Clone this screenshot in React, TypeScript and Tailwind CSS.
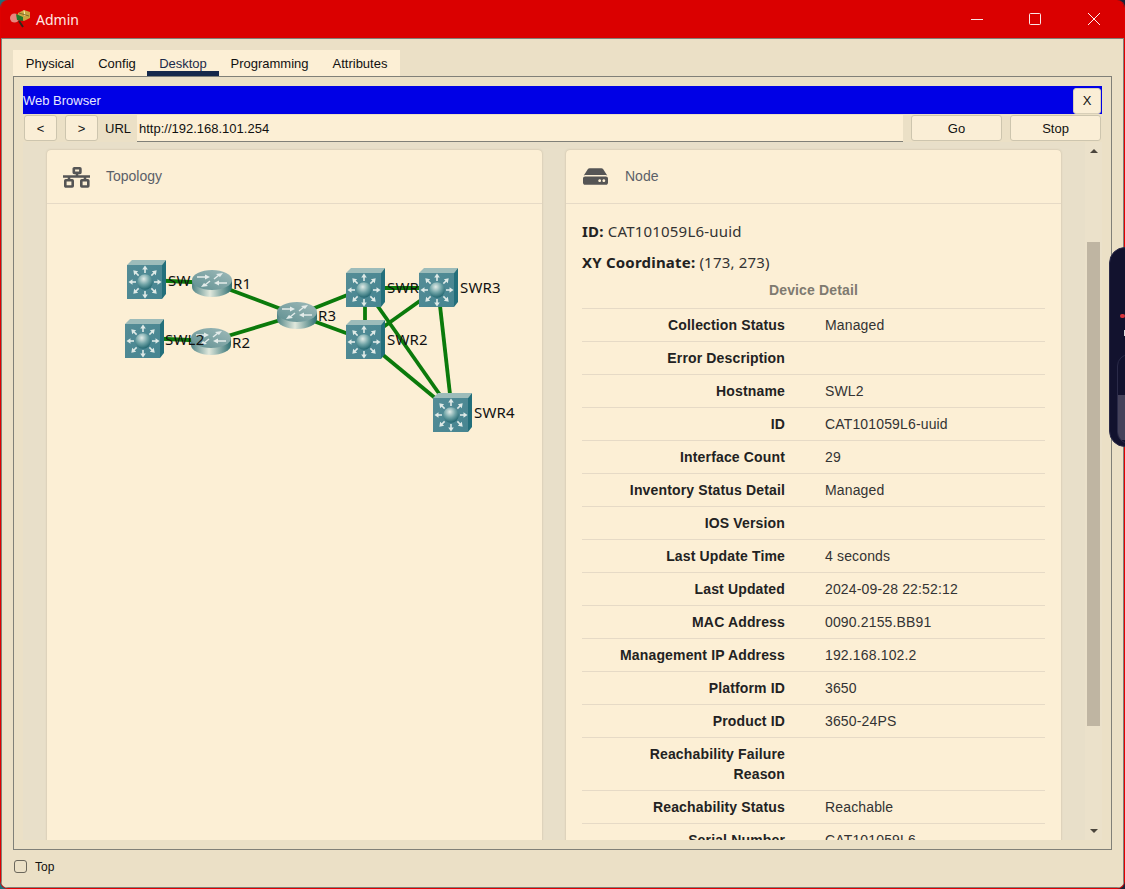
import React from "react";
import { FaHdd } from "react-icons/fa";

const rows: [string, string][] = [
  ["Collection Status", "Managed"],
  ["Error Description", ""],
  ["Hostname", "SWL2"],
  ["ID", "CAT101059L6-uuid"],
  ["Interface Count", "29"],
  ["Inventory Status Detail", "Managed"],
  ["IOS Version", ""],
  ["Last Update Time", "4 seconds"],
  ["Last Updated", "2024-09-28 22:52:12"],
  ["MAC Address", "0090.2155.BB91"],
  ["Management IP Address", "192.168.102.2"],
  ["Platform ID", "3650"],
  ["Product ID", "3650-24PS"],
  ["Reachability Failure Reason", ""],
  ["Reachability Status", "Reachable"],
  ["Serial Number", "CAT101059L6"],
];

const links: [number, number, number, number][] = [
  [147, 280, 212, 283],
  [144, 338, 211, 341],
  [212, 283, 297, 315],
  [211, 341, 297, 315],
  [297, 315, 365, 288],
  [297, 315, 365, 340],
  [365, 288, 438, 288],
  [365, 288, 365, 340],
  [438, 288, 365, 340],
  [365, 288, 452, 412],
  [365, 340, 452, 412],
  [438, 288, 452, 412],
];

const tabs: [string, string][] = [
  ["Physical", "w-[74px]"],
  ["Config", "w-[60px]"],
  ["Desktop", "w-[72px]"],
  ["Programming", "w-[101px]"],
  ["Attributes", "w-[80px]"],
];

function Sw({ x, y }: { x: number; y: number }) {
  const cx = x + 18;
  const cy = y + 22;
  const angles = [0, 45, 90, 135, 180, 225, 270, 315];
  return (
    <g>
      <polygon points={`${x},${y + 5} ${x + 5},${y} ${x + 39},${y} ${x + 35},${y + 5}`} fill="#9dbcba" />
      <polygon points={`${x + 35},${y + 5} ${x + 39},${y} ${x + 39},${y + 34} ${x + 35},${y + 39}`} fill="#236f7b" />
      <rect x={x} y={y + 5} width={35} height={34} fill="url(#swFace)" />
      {angles.map((a) => (
        <g key={a} transform={`rotate(${a} ${cx} ${cy})`}>
          <line x1={cx + 9} y1={cy} x2={cx + 13} y2={cy} stroke="#dfeae7" strokeWidth={1.6} />
          <polygon points={`${cx + 16.5},${cy} ${cx + 12.5},${cy - 2.8} ${cx + 12.5},${cy + 2.8}`} fill="#dfeae7" />
        </g>
      ))}
      <circle cx={cx} cy={cy} r={7.8} fill="url(#swBall)" />
    </g>
  );
}

function Rt({ x, y }: { x: number; y: number }) {
  const w = 40;
  const h = 27;
  const ry = 10;
  const cx = x + w / 2;
  const cy = y + ry;
  return (
    <g>
      <path
        d={`M${x},${cy} L${x},${y + h - ry} A${w / 2},${ry} 0 0 0 ${x + w},${y + h - ry} L${x + w},${cy} Z`}
        fill="url(#rtBody)"
      />
      <ellipse cx={cx} cy={cy} rx={w / 2} ry={ry} fill="url(#rtTop)" />
      <g fill="none" stroke="#e4ecea" strokeWidth={1.5}>
        <path d={`M${cx - 15},${cy - 3} L${cx - 6},${cy - 3}`} />
        <path d={`M${cx + 15},${cy + 3} L${cx + 6},${cy + 3}`} />
        <path d={`M${cx + 2},${cy - 1} L${cx + 7},${cy - 5}`} />
        <path d={`M${cx - 2},${cy + 1} L${cx - 7},${cy + 5}`} />
      </g>
      <g fill="#e4ecea">
        <polygon points={`${cx - 2},${cy - 3} ${cx - 7},${cy - 5.5} ${cx - 7},${cy - 0.5}`} />
        <polygon points={`${cx + 2},${cy + 3} ${cx + 7},${cy + 0.5} ${cx + 7},${cy + 5.5}`} />
        <polygon points={`${cx + 11},${cy - 7} ${cx + 4},${cy - 6} ${cx + 8},${cy - 3}`} />
        <polygon points={`${cx - 11},${cy + 7} ${cx - 4},${cy + 6} ${cx - 8},${cy + 3}`} />
      </g>
    </g>
  );
}

function Label({ x, y, children }: { x: number; y: number; children: string }) {
  return (
    <text x={x} y={y} fontSize={15} fill="#111" letterSpacing={0.2} style={{ fontFamily: '"Noto Sans", sans-serif' }}>
      {children}
    </text>
  );
}

function TopologyCanvas() {
  return (
    <svg viewBox="47 204 495 300" width={495} height={300} className="block">
      <defs>
        <linearGradient id="swFace" x1="0" y1="0" x2="1" y2="1">
          <stop offset="0" stopColor="#548c96" />
          <stop offset="1" stopColor="#468591" />
        </linearGradient>
        <radialGradient id="swBall" cx="0.42" cy="0.3" r="0.75">
          <stop offset="0" stopColor="#e2ece8" />
          <stop offset="0.5" stopColor="#6fa3a6" />
          <stop offset="1" stopColor="#175e69" />
        </radialGradient>
        <linearGradient id="rtBody" x1="0" y1="0" x2="1" y2="0">
          <stop offset="0" stopColor="#4f8385" />
          <stop offset="0.45" stopColor="#e0e8dc" />
          <stop offset="1" stopColor="#2f6f72" />
        </linearGradient>
        <linearGradient id="rtTop" x1="0" y1="1" x2="1" y2="0">
          <stop offset="0" stopColor="#5f8f91" />
          <stop offset="1" stopColor="#a0bbba" />
        </linearGradient>
      </defs>
      {links.map(([a, b, c, d], i) => (
        <line key={i} x1={a} y1={b} x2={c} y2={d} stroke="#0b7a0b" strokeWidth={3.8} />
      ))}
      <Sw x={127} y={260} />
      <Label x={168} y={286}>SW</Label>
      <Rt x={192} y={270} />
      <Label x={233} y={289}>R1</Label>
      <Sw x={125} y={319} />
      <Rt x={191} y={328} />
      <Label x={165} y={345}>SWL2</Label>
      <Label x={232} y={348}>R2</Label>
      <Rt x={277} y={302} />
      <Label x={318} y={321}>R3</Label>
      <Sw x={346} y={268} />
      <Label x={387} y={293}>SWR</Label>
      <Sw x={419} y={268} />
      <Label x={460} y={293}>SWR3</Label>
      <Sw x={346} y={320} />
      <Label x={387} y={345}>SWR2</Label>
      <Sw x={433} y={393} />
      <Label x={474} y={418}>SWR4</Label>
    </svg>
  );
}

function AppIcon() {
  return (
    <svg width={22} height={22} viewBox="0 0 22 22" className="shrink-0">
      <circle cx={4.5} cy={10} r={4.5} fill="#e8857c" />
      <line x1={9} y1={13} x2={13} y2={19} stroke="#33261a" strokeWidth={2} />
      <polygon points="8,5 14,2 20,4 20,10 14,13 8,10" fill="#c9a43f" />
      <polygon points="6,6 13,9 13,13 7,12" fill="#1f7a2a" />
      <line x1={14} y1={2.5} x2={15} y2={8} stroke="#fff1b8" strokeWidth={1} />
      <line x1={9} y1={5} x2={19} y2={8} stroke="#6b5a20" strokeWidth={0.8} />
    </svg>
  );
}

function NetIcon() {
  return (
    <svg width={27} height={22} viewBox="0 0 27 22" className="shrink-0">
      <g fill="none" stroke="#555" strokeWidth={2.6}>
        <rect x={10.8} y={2.3} width={6.6} height={4.6} rx={0.5} />
        <rect x={2.3} y={14.3} width={7.4} height={6.2} rx={0.5} />
        <rect x={18.3} y={14.3} width={7} height={6.2} rx={0.5} />
        <path d="M14 7v3M0 10.5h27M6 10.5v4M22 10.5v4" />
      </g>
    </svg>
  );
}

function Btn({ className, children }: { className: string; children: React.ReactNode }) {
  return (
    <button className={`h-[26px] shrink-0 rounded-[3px] border border-[#cdc5ae] bg-[#faeed6] pt-px text-[13px] text-[#111] ${className}`}>
      {children}
    </button>
  );
}

export default function App() {
  return (
    <div
      className="relative h-[889px] w-[1125px] overflow-hidden bg-gradient-to-r from-[#1d6f7a] to-[#1a2238] text-[13px] text-[#111]"
      style={{ fontFamily: '"Liberation Sans", Arial, sans-serif' }}
    >
      <div className="flex h-full flex-col overflow-hidden rounded-[8px] border-x border-b border-[#e00000]">
        <div className="flex h-[38px] shrink-0 items-center bg-[#da0000] pl-[9px]">
          <AppIcon />
          <span
            className="ml-[4px] text-[14px] text-[#ffe9e4]"
            style={{ fontFamily: '"Noto Sans", sans-serif' }}
          >
            Admin
          </span>
          <div className="ml-auto flex items-center">
            <svg width={14} height={14} viewBox="0 0 14 14" className="mr-[44px]">
              <line x1={1} y1={7.5} x2={13} y2={7.5} stroke="#fff" strokeWidth={1} opacity={0.9} />
            </svg>
            <svg width={14} height={14} viewBox="0 0 14 14" className="mr-[45px]">
              <rect x={1.5} y={1.5} width={11} height={11} rx={1} fill="none" stroke="#fff" strokeWidth={1} opacity={0.9} />
            </svg>
            <svg width={14} height={14} viewBox="0 0 14 14" className="mr-[23px]">
              <path d="M1 1L13 13M13 1L1 13" stroke="#fff" strokeWidth={1} opacity={0.95} />
            </svg>
          </div>
        </div>

        <div className="flex min-h-0 flex-1 flex-col border border-[#808078] bg-[#ebe0c6] pl-[11px] pr-[11px] pt-[11px]">
          <div className="flex h-[26px] w-[387px] shrink-0 bg-[#fcefd5]">
            {tabs.map(([t, w]) => (
              <div
                key={t}
                className={
                  t === "Desktop"
                    ? `flex items-center justify-center border-b-[5px] border-[#15284b] pt-[6px] text-[#1b2a4a] ${w}`
                    : `flex items-center justify-center pt-[1px] ${w}`
                }
              >
                {t}
              </div>
            ))}
          </div>

          <div className="flex min-h-0 flex-1 flex-col border border-[#808078] px-[9px] pb-[9px] pt-[9px]">
            <div className="flex h-[28px] shrink-0 items-center justify-between bg-[#0000e6] pr-px pt-px text-[#e8e8ff]">
              <span>Web Browser</span>
              <Btn className="w-[28px] border-[#d8cfb8]">X</Btn>
            </div>

            <div className="mt-px flex h-[27px] shrink-0 items-start pl-px">
              <Btn className="w-[33px]">&lt;</Btn>
              <Btn className="ml-[8px] w-[33px]">&gt;</Btn>
              <span className="ml-[7px] flex h-[26px] w-[32px] items-center pt-px">URL</span>
              <div className="flex h-[27px] w-[766px] shrink-0 items-center border-b border-[#808078] bg-[#fcefd5] pl-[2px] pt-px">
                http://192.168.101.254
              </div>
              <Btn className="ml-[8px] w-[91px]">Go</Btn>
              <Btn className="ml-[8px] w-[91px]">Stop</Btn>
            </div>

            <div className="flex min-h-0 flex-1 overflow-hidden">
              <div className="grid min-w-0 flex-1 grid-cols-[495px_495px] items-stretch gap-[24px] overflow-hidden bg-[#e8dfc9] pl-[24px] pt-[8px]">
                <div className="rounded-t-[4px] bg-[#fcefd5] shadow-[0_0_2px_rgba(120,100,70,0.35)]">
                  <div className="flex h-[54px] items-center border-b border-[#e6dac6] pl-[16px]">
                    <NetIcon />
                    <span className="ml-[16px] text-[14px] text-[#5b6068]">Topology</span>
                  </div>
                  <TopologyCanvas />
                </div>

                <div className="rounded-t-[4px] bg-[#fcefd5] shadow-[0_0_2px_rgba(120,100,70,0.35)]">
                  <div className="flex h-[54px] items-center border-b border-[#e6dac6] pl-[17px]">
                    <FaHdd size={25} color="#555555" />
                    <span className="ml-[17px] text-[14px] text-[#5b6068]">Node</span>
                  </div>
                  <div className="px-[16px] pt-[15px]">
                    <p className="h-[24px] text-[15px] leading-[24px] tracking-[0.2px] text-[#333]" style={{ fontFamily: '"Noto Sans", sans-serif' }}>
                      <b className="font-bold text-[#222]">ID:</b> CAT101059L6-uuid
                    </p>
                    <p className="mt-[7px] h-[24px] text-[15px] leading-[24px] tracking-[0.2px] text-[#333]" style={{ fontFamily: '"Noto Sans", sans-serif' }}>
                      <b className="font-bold text-[#222]">XY Coordinate:</b> (173, 273)
                    </p>
                    <div className="mb-[8px] mt-[6px] h-[20px] text-center text-[14px] font-bold leading-[20px] tracking-[0.15px] text-[#7f7a70]">
                      Device Detail
                    </div>
                    {rows.map(([k, v]) => (
                      <div key={k} className="grid grid-cols-[203px_1fr] border-t border-[#e6dac6] py-[6px] text-[14px] leading-[20px]">
                        <div className="pl-[20px] text-right font-bold tracking-[0.15px] text-[#222]">{k}</div>
                        <div className="pl-[40px] tracking-[0.15px] text-[#333]">{v}</div>
                      </div>
                    ))}
                  </div>
                </div>
              </div>

              <div className="relative w-[17px] shrink-0 bg-[#ebe1ca]">
                <div className="absolute left-[5px] top-[7px] h-0 w-0 border-x-[4px] border-b-[4px] border-x-transparent border-b-[#4a453c]" />
                <div className="absolute left-[2px] top-[100px] h-[484px] w-[13px] bg-[#bfb5a2]" />
                <div className="absolute bottom-[7px] left-[5px] h-0 w-0 border-x-[4px] border-t-[4px] border-x-transparent border-t-[#4a453c]" />
              </div>
            </div>
          </div>

          <div className="flex h-[37px] shrink-0 items-center pb-[4px]">
            <span className="ml-[1px] h-[13px] w-[13px] rounded-[3px] border border-[#6b675c]" />
            <span className="ml-[8px] text-[12px] text-[#111]">Top</span>
          </div>
        </div>
      </div>

      <div className="absolute left-[1109px] top-[247px] h-[200px] w-[40px] rounded-l-[16px] border border-[#2a2a48] bg-[#12122e]">
        <div className="absolute left-[10px] top-[66px] h-[4px] w-[5px] rounded-full bg-[#d9333a]" />
        <div className="absolute left-[14px] top-[82px] h-[6px] w-[4px] bg-[#d8d8d8]" />
        <div className="absolute left-[7px] top-[106px] h-[90px] w-[30px] overflow-hidden rounded-l-[12px] border border-[#2a2a48]">
          <div className="mt-[40px] h-[45px] bg-[#45425a]" />
        </div>
      </div>
    </div>
  );
}
